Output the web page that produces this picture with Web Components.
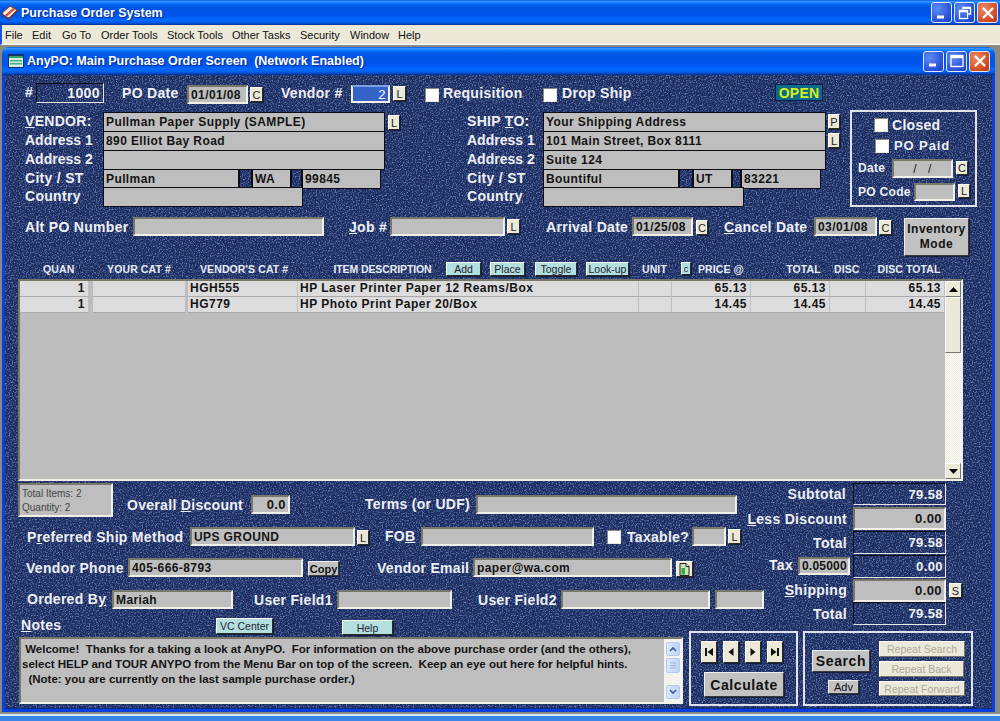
<!DOCTYPE html>
<html><head><meta charset="utf-8"><title>AnyPO</title>
<style>html,body{margin:0;padding:0;width:1000px;height:721px;overflow:hidden;font-family:"Liberation Sans",Arial,sans-serif}</style>
</head><body>
<po-desktop title-text="Purchase Order System">
<po-mdi title-text="AnyPO: Main Purchase Order Screen&#160;&#160;(Network Enabled)">

<po-row style="height:21px">
  <po-label style="margin-left:20px;width:11px;line-height:19px">#</po-label>
  <po-field kind="navy" r style="width:68px;height:20px;font-size:14px;padding-right:3px">1000</po-field>
  <po-label style="margin-left:18px;width:65px;line-height:21px">PO Date</po-label>
  <po-field style="width:61px;height:19px;margin-top:2px">01/01/08</po-field>
  <po-btn style="margin:4px 0 0 2px;width:13px;height:15px">C</po-btn>
  <po-label style="margin-left:18px;width:70px;line-height:21px">Vendor #</po-label>
  <po-field kind="sel" r style="width:39px;height:18px;margin-top:2px">2</po-field>
  <po-btn style="margin:3px 0 0 3px;width:13px;height:15px">L</po-btn>
  <po-check style="margin:5px 0 0 19px"></po-check>
  <po-label style="margin-left:4px;width:100px;line-height:21px">Requisition</po-label>
  <po-check style="margin:5px 0 0 0"></po-check>
  <po-label style="margin-left:5px;width:213px;line-height:20px">Drop Ship</po-label>
  <po-status style="width:48px;height:17px;margin-top:1px">OPEN</po-status>
</po-row>

<po-row style="margin-top:8px;height:94px">
  <div style="width:845px;flex:none">
    <po-row style="height:19px">
      <po-label style="margin-left:20px;width:78px;line-height:19px"><u>V</u>ENDOR:</po-label>
      <po-field kind="box" style="width:282px">Pullman Paper Supply (SAMPLE)</po-field>
      <po-btn style="margin:3px 0 0 3px;width:12px;height:15px">L</po-btn>
      <po-label style="margin-left:67px;width:76px;line-height:19px">SHIP <u>T</u>O:</po-label>
      <po-field kind="box" style="width:283px">Your Shipping Address</po-field>
      <po-btn style="margin:2px 0 0 2px;width:12px;height:15px">P</po-btn>
    </po-row>
    <po-row style="height:19px">
      <po-label style="margin-left:20px;width:78px;line-height:19px;letter-spacing:0">Address 1</po-label>
      <po-field kind="box" style="width:282px">890 Elliot Bay Road</po-field>
      <po-label style="margin-left:82px;width:76px;line-height:19px;letter-spacing:0">Address 1</po-label>
      <po-field kind="box" style="width:283px">101 Main Street, Box 8111</po-field>
      <po-btn style="margin:2px 0 0 2px;width:12px;height:15px">L</po-btn>
    </po-row>
    <po-row style="height:19px">
      <po-label style="margin-left:20px;width:78px;line-height:19px;letter-spacing:0">Address 2</po-label>
      <po-field kind="box" style="width:282px"></po-field>
      <po-label style="margin-left:82px;width:76px;line-height:19px;letter-spacing:0">Address 2</po-label>
      <po-field kind="box" style="width:283px">Suite 124</po-field>
    </po-row>
    <po-row style="height:18px">
      <po-label style="margin-left:20px;width:78px;line-height:18px">City / ST</po-label>
      <po-field kind="box" style="width:136px">Pullman</po-field>
      <po-field kind="gap" style="width:13px"></po-field>
      <po-field kind="box" style="width:39px">WA</po-field>
      <po-field kind="gap" style="width:11px"></po-field>
      <po-field kind="box" style="width:79px">99845</po-field>
      <po-label style="margin-left:86px;width:76px;line-height:18px">City / ST</po-label>
      <po-field kind="box" style="width:136px">Bountiful</po-field>
      <po-field kind="gap" style="width:14px"></po-field>
      <po-field kind="box" style="width:39px">UT</po-field>
      <po-field kind="gap" style="width:9px"></po-field>
      <po-field kind="box" style="width:80px">83221</po-field>
    </po-row>
    <po-row style="height:19px">
      <po-label style="margin-left:20px;width:78px;line-height:19px">Country</po-label>
      <po-field kind="box" style="width:200px"></po-field>
      <po-label style="margin-left:164px;width:76px;line-height:19px">Country</po-label>
      <po-field kind="box" style="width:201px"></po-field>
    </po-row>
  </div>
  <po-panel style="width:127px;height:97px;margin-top:-2px">
    <po-row style="margin-top:4px;height:18px">
      <po-check style="margin:2px 0 0 22px"></po-check>
      <po-label style="margin-left:4px;line-height:18px">Closed</po-label>
    </po-row>
    <po-row style="margin-top:3px;height:18px">
      <po-check style="margin:2px 0 0 23px"></po-check>
      <po-label style="margin-left:5px;line-height:18px;font-size:13px;letter-spacing:.9px">PO Paid</po-label>
    </po-row>
    <po-row style="margin-top:4px;height:19px">
      <po-label style="margin-left:6px;width:34px;line-height:19px;font-size:12px">Date</po-label>
      <po-field style="width:61px;height:19px;justify-content:center;font-weight:400;padding:0">/&#160;&#160;&#160;/</po-field>
      <po-btn style="margin:2px 0 0 3px;width:12px;height:14px">C</po-btn>
    </po-row>
    <po-row style="margin-top:5px;height:19px">
      <po-label style="margin-left:6px;width:56px;line-height:19px;font-size:12px">PO Code</po-label>
      <po-field style="width:41px;height:18px"></po-field>
      <po-btn style="margin:1px 0 0 3px;width:12px;height:14px">L</po-btn>
    </po-row>
  </po-panel>
</po-row>

<po-row style="margin-top:11px;height:20px">
  <po-label style="margin-left:20px;width:108px;line-height:20px">Alt PO Number</po-label>
  <po-field style="width:191px;height:19px"></po-field>
  <po-label style="margin-left:25px;width:41px;line-height:20px"><u>J</u>ob #</po-label>
  <po-field style="width:115px;height:19px"></po-field>
  <po-btn style="margin:2px 0 0 2px;width:13px;height:15px">L</po-btn>
  <po-label style="margin-left:26px;width:86px;line-height:21px">Arrival Date</po-label>
  <po-field style="width:61px;height:19px">01/25/08</po-field>
  <po-btn style="margin:3px 0 0 3px;width:12px;height:15px">C</po-btn>
  <po-label style="margin-left:16px;width:90px;line-height:21px"><u>C</u>ancel Date</po-label>
  <po-field style="width:63px;height:19px">03/01/08</po-field>
  <po-btn style="margin:3px 0 0 2px;width:13px;height:15px">C</po-btn>
  <po-btn kind="gray" style="margin:1px 0 0 12px;width:65px;height:38px;font-size:12px;line-height:15px;letter-spacing:.5px">Inventory<br>Mode</po-btn>
</po-row>

<po-row style="margin-top:25px;height:17px">
  <po-head style="margin-left:38px;width:29px">QUAN</po-head>
  <po-head style="margin-left:35px;width:64px">YOUR CAT #</po-head>
  <po-head style="margin-left:29px;width:87px">VENDOR'S CAT #</po-head>
  <po-head style="margin-left:46px;width:99px;letter-spacing:-.1px">ITEM&#160;DESCRIPTION</po-head>
  <po-btn kind="teal" style="margin-left:14px;width:35px;height:14px">Add</po-btn>
  <po-btn kind="teal" style="margin-left:9px;width:35px;height:14px">Place</po-btn>
  <po-btn kind="teal" style="margin-left:10px;width:42px;height:14px">Toggle</po-btn>
  <po-btn kind="teal" style="margin-left:9px;width:43px;height:14px">Look-up</po-btn>
  <po-head style="margin-left:13px;width:23px">UNIT</po-head>
  <po-btn kind="teal" style="margin-left:16px;width:10px;height:13px;font-size:9px">c</po-btn>
  <po-head style="margin-left:7px;width:43px">PRICE @</po-head>
  <po-head style="margin-left:45px;width:35px">TOTAL</po-head>
  <po-head style="margin-left:13px;width:24px">DISC</po-head>
  <po-head style="margin-left:19px;width:64px">DISC TOTAL</po-head>
</po-row>

<po-grid style="margin-left:13px">
  <po-tr>
    <po-td r>1</po-td><po-td kind="sp"></po-td><po-td></po-td><po-td kind="sp2"></po-td><po-td>HGH555</po-td><po-td>HP Laser Printer Paper 12 Reams/Box</po-td><po-td></po-td><po-td r>65.13</po-td><po-td r>65.13</po-td><po-td></po-td><po-td r>65.13</po-td>
  </po-tr>
  <po-tr>
    <po-td r>1</po-td><po-td kind="sp"></po-td><po-td></po-td><po-td kind="sp2"></po-td><po-td>HG779</po-td><po-td>HP Photo Print Paper 20/Box</po-td><po-td></po-td><po-td r>14.45</po-td><po-td r>14.45</po-td><po-td></po-td><po-td r>14.45</po-td>
  </po-tr>
</po-grid>

<po-row style="margin-top:2px;height:223px">
  <div style="width:684px;flex:none">
    <po-row style="height:34px">
      <po-summary style="margin-left:13px;width:95px;height:34px">Total Items: 2<br>Quantity: 2</po-summary>
      <po-label style="margin:13px 0 0 14px;width:124px;line-height:19px"><span>Overall <u>D</u>iscount</span></po-label>
      <po-field r style="width:39px;height:19px;margin-top:12px">0.0</po-field>
      <po-label style="margin:12px 0 0 75px;width:111px;line-height:19px">Terms (or UDF)</po-label>
      <po-field style="width:261px;height:19px;margin-top:12px"></po-field>
    </po-row>
    <po-row style="margin-top:10px;height:19px">
      <po-label style="margin-left:22px;width:163px;line-height:20px">P<u>r</u>eferred Ship Method</po-label>
      <po-field style="width:165px;height:19px">UPS GROUND</po-field>
      <po-btn style="margin:3px 0 0 2px;width:12px;height:15px">L</po-btn>
      <po-label style="margin-left:16px;width:36px;line-height:19px">FO<u>B</u></po-label>
      <po-field style="width:173px;height:19px"></po-field>
      <po-check style="margin:3px 0 0 13px"></po-check>
      <po-label style="margin-left:6px;width:65px;line-height:20px">Taxable?</po-label>
      <po-field style="width:34px;height:19px"></po-field>
      <po-btn style="margin:2px 0 0 2px;width:13px;height:15px">L</po-btn>
    </po-row>
    <po-row style="margin-top:12px;height:19px">
      <po-label style="margin-left:21px;width:102px;line-height:20px">Vendor Phone</po-label>
      <po-field style="width:175px;height:19px">405-666-8793</po-field>
      <po-btn kind="gray" style="margin:3px 0 0 5px;width:31px;height:15px;font-weight:700;font-size:11px">Copy</po-btn>
      <po-label style="margin-left:38px;width:96px;line-height:20px">Vendor Email</po-label>
      <po-field style="width:199px;height:19px">paper@wa.com</po-field>
      <po-btn style="margin:3px 0 0 4px;width:17px;height:16px"><svg width="11" height="13" viewBox="0 0 11 13"><path d="M1 .5h6l3 3v9H1z" fill="#c8e8b0" stroke="#222"/><path d="M7 .5v3h3" fill="#fff" stroke="#222"/><rect x="2.5" y="5" width="3.5" height="6.5" fill="#3aa64a"/></svg></po-btn>
    </po-row>
    <po-row style="margin-top:13px;height:19px">
      <po-label style="margin-left:22px;width:85px;line-height:19px">Ordered B<u>y</u></po-label>
      <po-field style="width:121px;height:19px">Mariah</po-field>
      <po-label style="margin-left:21px;width:83px;line-height:20px">User Field1</po-label>
      <po-field style="width:115px;height:19px"></po-field>
      <po-label style="margin-left:26px;width:83px;line-height:20px">User Field2</po-label>
      <po-field style="width:149px;height:19px"></po-field>
      <po-field style="margin-left:5px;width:49px;height:19px"></po-field>
    </po-row>
    <po-row style="margin-top:9px;height:19px">
      <po-label style="margin-left:16px;width:195px;line-height:15px"><u>N</u>otes</po-label>
      <po-btn kind="teal" style="width:57px;height:16px">VC Center</po-btn>
      <po-btn kind="teal" style="margin:2px 0 0 69px;width:51px;height:15px">Help</po-btn>
    </po-row>
    <po-notes style="margin-left:14px"> Welcome!  Thanks for a taking a look at AnyPO.  For information on the above purchase order (and the others),
select HELP and TOUR ANYPO from the Menu Bar on top of the screen.  Keep an eye out here for helpful hints.
  (Note: you are currently on the last sample purchase order.)</po-notes>
  </div>
  <div style="width:290px;flex:none">
    <po-row style="height:24px">
      <po-label style="width:157px;text-align:right;line-height:22px">Subtotal</po-label>
      <po-field kind="navy" r style="margin-left:7px;width:93px;height:22px">79.58</po-field>
    </po-row>
    <po-row style="height:24px">
      <po-label style="width:158px;text-align:right;line-height:24px"><u>L</u>ess Discount</po-label>
      <po-field r style="margin-left:6px;width:93px;height:23px">0.00</po-field>
    </po-row>
    <po-row style="height:24px">
      <po-label style="width:158px;text-align:right;line-height:24px">Total</po-label>
      <po-field kind="navy" r style="margin-left:6px;width:93px;height:23px">79.58</po-field>
    </po-row>
    <po-row style="height:24px">
      <po-label style="width:104px;text-align:right;line-height:20px">Tax</po-label>
      <po-field style="margin:2px 0 0 5px;width:52px;height:18px;letter-spacing:.2px;padding:0 0 0 2px">0.05000</po-field>
      <po-field kind="navy" r style="margin-left:3px;width:93px;height:23px">0.00</po-field>
    </po-row>
    <po-row style="height:23px">
      <po-label style="width:158px;text-align:right;line-height:22px"><u>S</u>hipping</po-label>
      <po-field r style="margin-left:6px;width:93px;height:23px">0.00</po-field>
      <po-btn style="margin:4px 0 0 3px;width:13px;height:15px">S</po-btn>
    </po-row>
    <po-row style="height:24px">
      <po-label style="width:158px;text-align:right;line-height:24px">Total</po-label>
      <po-field kind="navy" r style="margin-left:6px;width:93px;height:23px">79.58</po-field>
    </po-row>
    <po-row style="margin-top:5px;height:75px">
      <po-panel style="width:109px;height:75px">
        <po-row style="margin:8px 0 0 10px;gap:6px;height:22px">
          <po-btn style="width:16px;height:22px"><svg width="10" height="10" viewBox="0 0 10 10"><path d="M1 1h2v8H1zM9 1v8L3.5 5z" fill="#111"/></svg></po-btn>
          <po-btn style="width:16px;height:22px"><svg width="10" height="10" viewBox="0 0 10 10"><path d="M7.5 1v8L2.500 5z" fill="#111"/></svg></po-btn>
          <po-btn style="width:16px;height:22px"><svg width="10" height="10" viewBox="0 0 10 10"><path d="M2.500 1v8L7.500 5z" fill="#111"/></svg></po-btn>
          <po-btn style="width:16px;height:22px"><svg width="10" height="10" viewBox="0 0 10 10"><path d="M7 1h2v8H7zM1 1v8L6.500 5z" fill="#111"/></svg></po-btn>
        </po-row>
        <po-btn kind="gray" style="display:flex;margin:9px 0 0 13px;width:80px;height:25px;font-size:14px;font-weight:700;letter-spacing:.6px">Calculate</po-btn>
      </po-panel>
      <po-panel style="margin-left:5px;width:170px;height:75px">
        <po-row>
          <div style="margin:17px 0 0 7px;width:58px">
            <po-btn kind="gray" style="display:flex;width:58px;height:22px;font-size:14px;font-weight:700;letter-spacing:.6px">Search</po-btn>
            <po-btn kind="gray" style="display:flex;margin:8px 0 0 16px;width:31px;height:14px;font-size:11px;font-weight:400">Adv</po-btn>
          </div>
          <div style="margin:8px 0 0 9px;width:86px">
            <po-btn kind="off" style="display:flex;width:86px;height:16px">Repeat Search</po-btn>
            <po-btn kind="off" style="display:flex;margin-top:4px;width:85px;height:16px">Repeat Back</po-btn>
            <po-btn kind="off" style="display:flex;margin-top:4px;width:86px;height:15px">Repeat Forward</po-btn>
          </div>
        </po-row>
      </po-panel>
    </po-row>
  </div>
</po-row>
</po-mdi>
</po-desktop>

<script>
const FONT = '"Liberation Sans",Arial,sans-serif';
const LUNA = 'linear-gradient(#0058e6 0%,#3a93ff 5%,#288eff 8%,#127dff 11%,#036ffc 15%,#0262ee 20%,#0057e5 28%,#0054e3 40%,#0055eb 60%,#005bf5 70%,#026afe 80%,#0062ef 88%,#0052d6 93%,#0040ab 96%,#003092 100%)';
const NOISE = `url("data:image/svg+xml,%3Csvg xmlns='http://www.w3.org/2000/svg' width='240' height='240'%3E%3Cfilter id='n' x='0' y='0' width='100%25' height='100%25' color-interpolation-filters='sRGB'%3E%3CfeTurbulence type='fractalNoise' baseFrequency='.7' numOctaves='2' stitchTiles='stitch'/%3E%3CfeColorMatrix values='0 0 0 0 .42 0 0 0 0 .5 0 0 0 0 .72 3 0 0 0 -1.4'/%3E%3C/filter%3E%3Crect width='240' height='240' filter='url(%23n)'/%3E%3C/svg%3E")`;

function def(name, css, html = '<slot></slot>') {
  customElements.define(name, class extends HTMLElement {
    constructor() {
      super();
      const r = this.attachShadow({ mode: 'open' });
      const h = typeof html === 'function' ? html(this) : html;
      r.innerHTML = `<style>${css}</style>${h}`;
    }
  });
}

function winBtns(mid) {
  const restore = `<svg width="14" height="14" viewBox="0 0 14 14" fill="none" stroke="#fff"><path d="M5 3.500V1.500h7.500V8H10" stroke-width="1.300"/><rect x="1.500" y="4.500" width="8" height="8" stroke-width="1.300"/><path d="M1.500 5.500h8M5 2.200h7.500" stroke-width="1.600"/></svg>`;
  const max = `<svg width="14" height="14" viewBox="0 0 14 14" fill="none" stroke="#fff"><rect x="1" y="1.500" width="12" height="11" stroke-width="1.300"/><path d="M1 3h12" stroke-width="2.400"/></svg>`;
  return `<div class="btns">
    <div class="b"><svg width="14" height="14" viewBox="0 0 14 14"><rect x="2" y="9.500" width="7" height="3" fill="#fff"/></svg></div>
    <div class="b">${mid ? max : restore}</div>
    <div class="b x"><svg width="14" height="14" viewBox="0 0 14 14" stroke="#fff" stroke-width="2.200" stroke-linecap="round"><path d="M2.500 2.500l9 9M11.500 2.500l-9 9"/></svg></div>
  </div>`;
}
const CHROME_CSS = `
  .bar{display:flex;align-items:center;color:#fff;font:bold 12.500px ${FONT};letter-spacing:0;text-shadow:1px 1px 1px #0a2a90;background:${LUNA}}
  .bar span{flex:1;white-space:pre}
  .btns{display:flex;gap:2px}
  .b{box-sizing:border-box;width:21px;height:21px;border:1px solid #dfe8ff;border-radius:3px;background:radial-gradient(circle at 30% 30%,#5c8cf0,#2850d8 70%,#1c3cc0);display:flex;align-items:center;justify-content:center}
  .x{background:radial-gradient(circle at 30% 30%,#ea8a64,#d24a22 70%,#b83010)}
`;

def('po-desktop', `
  :host{display:flex;flex-direction:column;width:1000px;height:721px;background:#ece9d8;overflow:hidden}
  ${CHROME_CSS}
  .bar{height:25px;flex:none;padding:0 2px 0 1px}
  .bar svg.ic{margin-right:3px;flex:none}
  .menu{height:20px;flex:none;display:flex;align-items:center;background:#ece9d8;font:11px ${FONT};color:#111;box-sizing:border-box;border-bottom:1px solid #fff;border-left:2px solid #1a55e0;padding-left:3px}
  .menu span{flex:none;white-space:nowrap;letter-spacing:0}
  .work{flex:1;background:#8a8a85;padding:2px 5px 0 2px;min-height:0}
  .foot{height:7px;flex:none;background:#3a86e6;border-top:2px solid #d8e6f6;box-sizing:border-box}
`, h => `
  <div class="bar">
    <svg class="ic" width="17" height="17" viewBox="0 0 17 17"><path d="M1 9l8-7 7 4-8 8z" fill="#f4e2c4" stroke="#8a3a20"/><path d="M2 10l7-6 5 3-7 6z" fill="#fff6e6"/><path d="M4 11l8-7 2 1.500-8 7z" fill="#d8503a"/><path d="M1 9v2l7 5 8-9V6" fill="none" stroke="#7a3010"/></svg>
    <span>${h.getAttribute('title-text')}</span>
    ${winBtns(false)}
  </div>
  <div class="menu">
    <span style="width:27px">File</span><span style="width:30px">Edit</span><span style="width:39px">Go To</span><span style="width:66px">Order Tools</span><span style="width:65px">Stock Tools</span><span style="width:68px">Other Tasks</span><span style="width:50px">Security</span><span style="width:48px">Window</span><span>Help</span>
  </div>
  <div class="work"><slot></slot></div>
  <div class="foot"></div>
`);

def('po-mdi', `
  :host{display:block;height:665px}
  ${CHROME_CSS}
  .bar{height:28px;padding:0 5px 0 6px;border-radius:7px 7px 0 0;box-sizing:border-box}
  .bar svg{flex:none}
  .bar svg.ic{margin-right:3px}
  .body{box-sizing:border-box;height:637px;border:solid #0a3fe0;border-width:0 3px 3px 3px;background-color:#1c2d60;background-image:${NOISE};padding-top:8px;box-shadow:inset 0 -1px 0 #0a2a90}
`, h => `
  <div class="bar">
    <svg class="ic" width="16" height="14" viewBox="0 0 16 14"><rect width="16" height="14" fill="#12306a"/><rect x="1" y="2" width="14" height="11" fill="#cfeee0"/><rect x="1" y="2" width="14" height="2" fill="#3aa070"/><rect x="2" y="6" width="12" height="1.500" fill="#4ab088"/><rect x="2" y="9" width="12" height="1.500" fill="#4ab088"/></svg>
    <span>${h.getAttribute('title-text')}</span>
    ${winBtns(true)}
  </div>
  <div class="body"><slot></slot></div>
`);

def('po-row', `:host{display:flex;align-items:flex-start;width:max-content;min-width:100%}::slotted(*){flex:none}`);

def('po-label', `:host{display:block;flex:none;font:bold 14px ${FONT};letter-spacing:.3px;color:#eef0f4;white-space:nowrap}`);

def('po-head', `:host{display:block;flex:none;font:bold 10.500px ${FONT};line-height:15px;color:#e8ecf4;white-space:nowrap;text-align:center;letter-spacing:.1px}`);

def('po-field', `
  :host{display:flex;align-items:center;flex:none;box-sizing:border-box;height:20px;padding:0 1px 0 2px;background:#bebebe;border:2px solid;border-color:#77776c #f0f0e6 #f0f0e6 #77776c;font:bold 12px ${FONT};letter-spacing:.4px;color:#141414;white-space:nowrap;overflow:hidden}
  :host([r]){justify-content:flex-end;padding-right:2px;font-size:13px}
  :host([kind=box]){border:1px solid #0c0c14;border-width:1.500px 1px 1.500px 1px;padding-left:2px}
  :host([kind=gap]){border:1px solid #0c0c14;background:transparent}
  :host([kind=navy]){background:transparent;color:#f2f2f2;border-color:#0c0c18 #e8e8e4 #e8e8e4 #0c0c18;border-width:1.500px}
  :host([kind=sel]){background:#3563c8;color:#fff;border-color:#7f9fe0 #f0f0e6 #f0f0e6 #f0f0e6;font-weight:400}
`);

def('po-btn', `
  :host{display:inline-flex;flex:none;align-items:center;justify-content:center;box-sizing:border-box;text-align:center;background:#ece9d8;border:1px solid;border-color:#fffef6 #2a2a26 #2a2a26 #fffef6;box-shadow:1px 1px 0 #15203f;font:11px ${FONT};color:#222;white-space:nowrap}
  :host([kind=teal]){background:#b3dfdf;font-size:10.500px;color:#223}
  :host([kind=gray]){background:#c2c2c2;font-weight:700;color:#111;border-color:#eee #3a3a3a #3a3a3a #eee}
  :host([kind=off]){background:#ece9d8;color:#a8a89c;font-size:10.500px;border-color:#fff #77776c #77776c #fff;box-shadow:none}
  ::slotted(svg){display:block}
`);

def('po-check', `:host{display:block;flex:none;box-sizing:border-box;width:14px;height:14px;background:#fff;border:1.500px solid;border-color:#8a8a80 #ece9d8 #ece9d8 #8a8a80}`);

def('po-status', `:host{display:flex;flex:none;align-items:center;justify-content:center;box-sizing:border-box;background:#0c6a8a;border:1px solid #0b1c4c;color:#d6f018;font:bold 14px ${FONT};letter-spacing:.2px}`);

def('po-panel', `:host{display:block;flex:none;box-sizing:border-box;border:2px solid #dfe2ea}`);

def('po-summary', `:host{display:block;flex:none;box-sizing:border-box;background:#bebebe;border:2px solid;border-color:#77776c #f0f0e6 #f0f0e6 #77776c;font:10px/13.500px ${FONT};color:#444;padding:2px 1px 0 2px}`);

def('po-grid', `
  :host{display:block;box-sizing:border-box;width:945px;height:202px;border:2px solid;border-color:#77776c #f0f0e6 #f0f0e6 #77776c;background:#bdbdbd;position:relative}
  .sb{position:absolute;right:0;top:0;bottom:0;width:16px;background:repeating-conic-gradient(#fff 0 25%,#ece9d8 0 50%) 0 0/2px 2px;display:flex;flex-direction:column}
  .a,.t{box-sizing:border-box;background:#ece9d8;border:1px solid;border-color:#fff #77776c #77776c #fff;flex:none;display:flex;align-items:center;justify-content:center}
  .a{height:16px}.t{height:56px}
  .sp{flex:1}
`, `<slot></slot><div class="sb">
   <div class="a"><svg width="9" height="5" viewBox="0 0 9 5"><path d="M4.500 0L9 5H0z" fill="#000"/></svg></div>
   <div class="t"></div><div class="sp"></div>
   <div class="a"><svg width="9" height="5" viewBox="0 0 9 5"><path d="M4.500 5L9 0H0z" fill="#000"/></svg></div></div>`);

def('po-tr', `:host{display:grid;width:925px;height:16px;grid-template-columns:69px 4px 93px 2px 110px 341px 33px 79px 79px 36px 79px}`);

def('po-td', `
  :host{display:block;box-sizing:border-box;height:16px;background:#dcdcdc;border-right:1px solid #c0c0c0;border-bottom:1px solid #aaa;font:bold 12px/15px ${FONT};letter-spacing:.5px;color:#141414;padding:0 2px;white-space:nowrap;overflow:hidden}
  :host([r]){text-align:right;padding-right:3px}
  :host([kind=sp]){background:#bdbdbd;border:0;padding:0}
  :host([kind=sp2]){background:#bdbdbd;border:0;padding:0}
`);

def('po-notes', `
  :host{display:block;box-sizing:border-box;width:664px;height:67px;background:#bebebe;border:2px solid;border-color:#77776c #f4f4ee #f4f4ee #77776c;position:relative;font:bold 11.500px/15px ${FONT};color:#141414;white-space:pre;overflow:hidden;padding:3px 0 0 1px}
  .sb{position:absolute;right:0;top:0;bottom:0;width:17px;background:#f4f4ee;display:flex;flex-direction:column;align-items:center;padding:3px 0;box-sizing:border-box}
  .a,.t{box-sizing:border-box;width:14px;border:1px solid #b6c8f4;border-radius:2px;background:linear-gradient(90deg,#dfe9fd,#c0d2f8);display:flex;align-items:center;justify-content:center;flex:none}
  .a{height:14px}.t{height:15px;margin-top:2px}
  .sp{flex:1}
`, `<slot></slot><div class="sb">
  <div class="a"><svg width="8" height="6" viewBox="0 0 8 6" fill="none" stroke="#3a5a9a" stroke-width="1.600"><path d="M1 5l3-3 3 3"/></svg></div>
  <div class="t"><svg width="8" height="7" viewBox="0 0 8 7" stroke="#9ab2e6"><path d="M1 1h6M1 3.500h6M1 6h6"/></svg></div><div class="sp"></div>
  <div class="a"><svg width="8" height="6" viewBox="0 0 8 6" fill="none" stroke="#3a5a9a" stroke-width="1.600"><path d="M1 1l3 3 3-3"/></svg></div></div>`);
</script>
</body></html>
